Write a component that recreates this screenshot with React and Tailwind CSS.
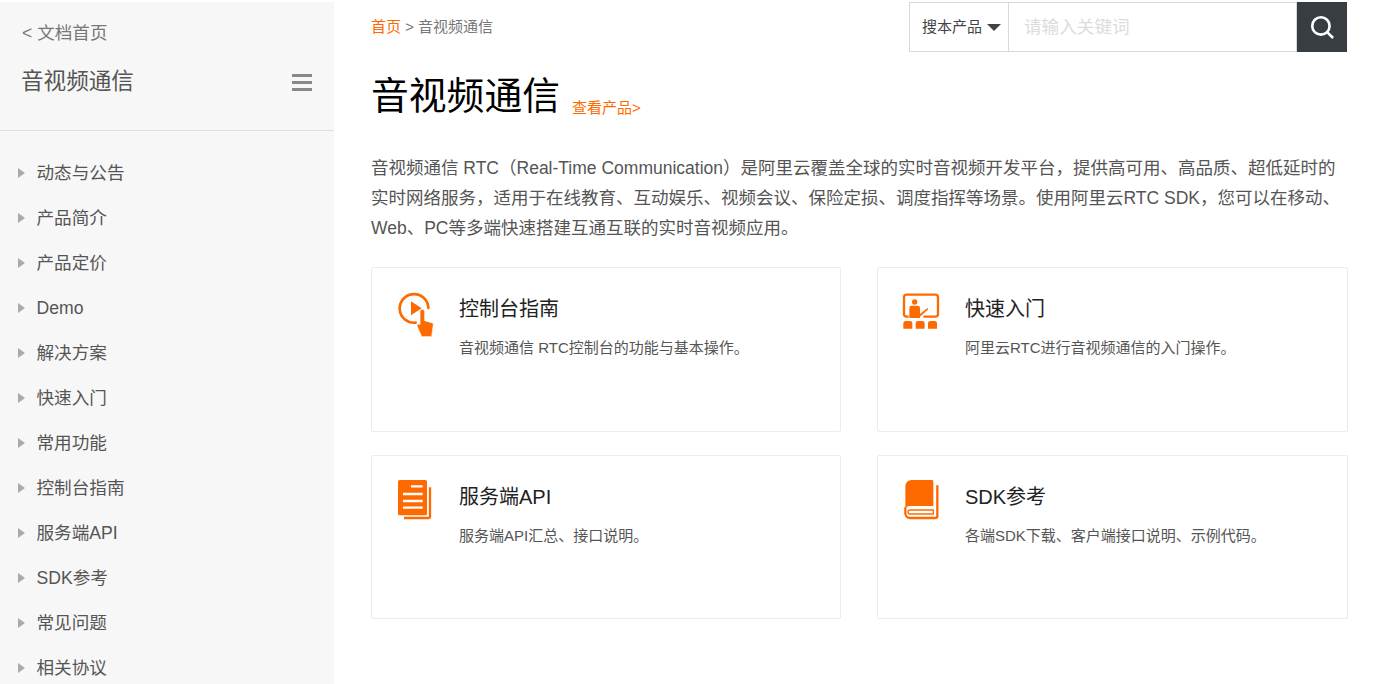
const menu = ["动态与公告","产品简介","产品定价","Demo","解决方案","快速入门","常用功能","控制台指南","服务端API","SDK参考","常见问题","相关协议"];

function PlayIcon() {
  return (
    <svg viewBox="0 0 180 180" className="w-[60px] h-[60px]" fill="none">
      <path d="M92 128 A43 43 0 1 1 130 84" stroke="#ff6a00" strokeWidth="8" strokeLinecap="round" />
      <path d="M78 64 L110 85 L78 106 Z" fill="#ff6a00" />
      <path d="M105 95 a7 7 0 0 1 14 0 V122 L140 128 a5 5 0 0 1 5 6 L140 170 H110 L96 138 a5 5 0 0 1 9 -4 Z" fill="#ff6a00" stroke="#fff" strokeWidth="2" />
    </svg>
  );
}
function TeachIcon() {
  return (
    <svg viewBox="0 0 180 180" className="w-[60px] h-[60px]" fill="none">
      <path d="M56 110 H50 a8 8 0 0 1 -8 -8 V52 a8 8 0 0 1 8 -8 H136 a8 8 0 0 1 8 8 V102 a8 8 0 0 1 -8 8 H100" stroke="#ff6a00" strokeWidth="7" />
      <circle cx="74" cy="66" r="8" fill="#ff6a00" />
      <path d="M58 84 a7 7 0 0 1 7 -7 H83 a7 7 0 0 1 7 7 V102 L112 84 L115 88 L90 110 V114 H58 Z" fill="#ff6a00" />
      <path d="M40 146 V130 a7 7 0 0 1 7 -7 H60 a7 7 0 0 1 7 7 V146 Z M77 146 V130 a7 7 0 0 1 7 -7 H97 a7 7 0 0 1 7 7 V146 Z M114 146 V130 a7 7 0 0 1 7 -7 H134 a7 7 0 0 1 7 7 V146 Z" fill="#ff6a00" />
    </svg>
  );
}
function DocIcon() {
  return (
    <svg viewBox="0 0 180 180" className="w-[60px] h-[60px]" fill="none">
      <path d="M135 52 V141 a3 3 0 0 1 -3 3 H57" stroke="#ff6a00" strokeWidth="7" />
      <rect x="39" y="30" width="87" height="106" rx="5" fill="#ff6a00" />
      <path d="M78 49 H113 M54 72 H113 M54 93 H113 M54 113 H113" stroke="#fff" strokeWidth="7" />
    </svg>
  );
}
function BookIcon() {
  return (
    <svg viewBox="0 0 180 180" className="w-[60px] h-[60px]" fill="none">
      <path d="M46 48 a18 18 0 0 1 18 -18 H126 a4 4 0 0 1 4 4 V108 H60 a14 14 0 0 0 -14 8 Z" fill="#ff6a00" />
      <path d="M46 112 V130 a14 14 0 0 0 14 14 H136 a6 6 0 0 0 6 -6 V46" stroke="#ff6a00" strokeWidth="7" />
      <path d="M60 120 H130 V132 H60 a6 6 0 0 1 0 -12 Z" stroke="#ff6a00" strokeWidth="4" />
    </svg>
  );
}

function Card({ icon, title, desc, h, iconClass }) {
  return (
    <div className={`border border-[#ececec] rounded-[2px] flex pl-[12px] ${h}`}>
      <div className={`shrink-0 ${iconClass}`}>{icon}</div>
      <div>
        <h3 className="text-[20px] leading-[28px] text-[#222] mt-[27px] font-normal">{title}</h3>
        <p className="text-[15px] leading-[22px] text-[#555] mt-[14px]">{desc}</p>
      </div>
    </div>
  );
}

export default function App() {
  return (
    <div className="w-[1380px] h-[684px] overflow-hidden flex bg-white" style={{ fontFamily: '"Liberation Sans", "Noto Sans CJK SC", sans-serif' }}>
      <aside className="w-[334px] shrink-0 bg-[#f7f7f7] mt-[2px]">
        <div className="h-[129px] border-b border-[#e0e0e0] pl-[22px] pr-[22px]">
          <div className="text-[17.6px] leading-[26px] text-[#777] pt-[18px]">&lt; 文档首页</div>
          <div className="flex items-center justify-between mt-[18px]">
            <span className="text-[22.6px] leading-[36px] text-[#555] -ml-px">音视频通信</span>
            <div className="flex flex-col gap-[4px] w-[20px]">
              <span className="h-[3px] bg-[#888]" />
              <span className="h-[3px] bg-[#888]" />
              <span className="h-[3px] bg-[#888]" />
            </div>
          </div>
        </div>
        <ul className="pt-[20px]">
          {menu.map((m) => (
            <li key={m} className="h-[45px] flex items-center pl-[18px] text-[17.6px] text-[#555]">
              <span className="w-0 h-0 border-y-[5px] border-y-transparent border-l-[7px] border-l-[#aaa] mr-[11.5px] -translate-y-px" />
              {m}
            </li>
          ))}
        </ul>
      </aside>

      <main className="w-[977px] ml-[37px] shrink-0">
        <div className="flex justify-between items-start pt-[2px]">
          <div className="text-[15px] leading-[20px] mt-[15px] text-[#777]">
            <span className="text-[#ff6a00]">首页</span> &gt; 音视频通信
          </div>
          <div className="flex h-[50px] w-[438px] mr-[1px]">
            <div className="w-[100px] border border-[#d9d9d9] flex items-center pl-[12px] text-[15px] text-[#444]">
              搜本产品
              <span className="w-0 h-0 ml-[5px] border-x-[7px] border-x-transparent border-t-[7px] border-t-[#444]" />
            </div>
            <div className="flex-1 border-y border-r border-[#d9d9d9] flex items-center pl-[15px] pt-[1px] text-[17.6px] text-[#dcdcdc]">请输入关键词</div>
            <div className="w-[50px] bg-[#373d41] flex items-center justify-center">
              <svg viewBox="0 0 24 24" className="w-[26px] h-[26px]" fill="none" stroke="#fff" strokeWidth="2.4" strokeLinecap="round">
                <circle cx="11" cy="11" r="8" />
                <path d="M17 17 L21.5 21.5" />
              </svg>
            </div>
          </div>
        </div>
        <div className="flex items-end mt-[17px]">
          <h1 className="text-[37.8px] leading-[54px] text-black font-normal">音视频通信</h1>
          <a className="text-[15px] leading-[20px] text-[#ff6a00] ml-[12px] mb-[5px]">查看产品&gt;</a>
        </div>
        <p className="text-[17.5px] leading-[30px] text-[#555] mt-[30px] w-[977px]">
          音视频通信 RTC（Real-Time Communication）是阿里云覆盖全球的实时音视频开发平台，提供高可用、高品质、超低延时的实时网络服务，适用于在线教育、互动娱乐、视频会议、保险定损、调度指挥等场景。使用阿里云RTC SDK，您可以在移动、Web、PC等多端快速搭建互通互联的实时音视频应用。
        </p>
        <div className="grid grid-cols-[470px_471px] gap-x-[36px] gap-y-[23px] mt-[24px]">
          <Card h="h-[165px]" iconClass="w-[74px] ml-px pt-[12px]" icon={<PlayIcon />} title="控制台指南" desc="音视频通信 RTC控制台的功能与基本操作。" />
          <Card h="h-[165px]" iconClass="w-[75px] pt-[12px]" icon={<TeachIcon />} title="快速入门" desc="阿里云RTC进行音视频通信的入门操作。" />
          <Card h="h-[164px]" iconClass="w-[74px] ml-px pt-[14px]" icon={<DocIcon />} title="服务端API" desc="服务端API汇总、接口说明。" />
          <Card h="h-[164px]" iconClass="w-[75px] pt-[14px]" icon={<BookIcon />} title="SDK参考" desc="各端SDK下载、客户端接口说明、示例代码。" />
        </div>
      </main>
    </div>
  );
}
